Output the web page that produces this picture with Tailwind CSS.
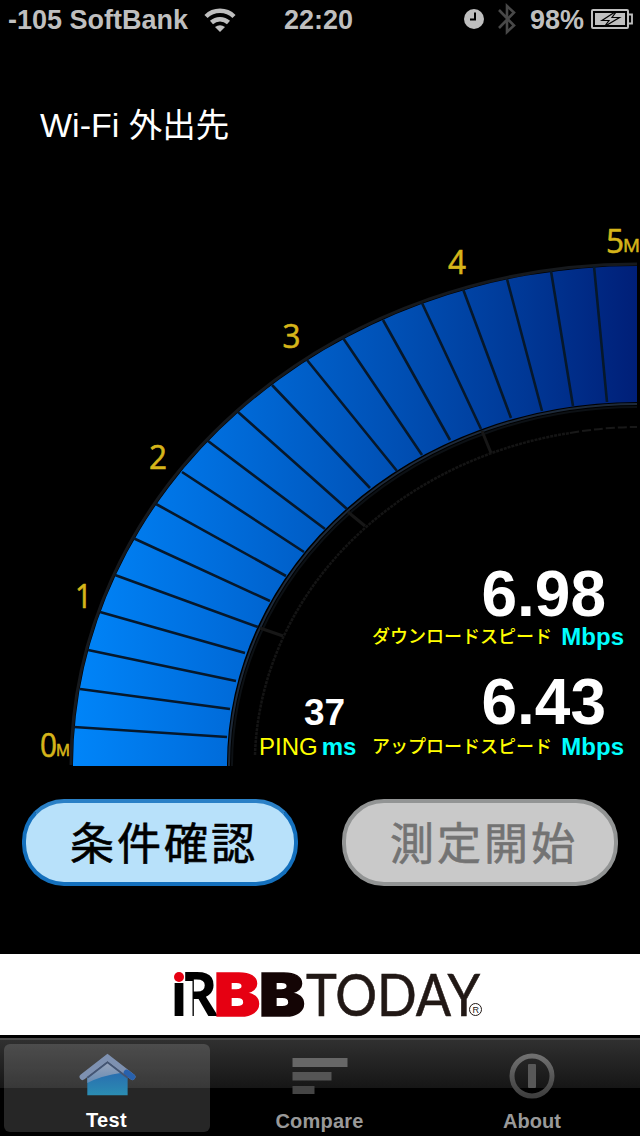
<!DOCTYPE html>
<html lang="ja">
<head>
  <meta charset="UTF-8">
  <meta name="viewport" content="width=device-width, initial-scale=1.0">
  <title>RBB TODAY Speed Test</title>
  <script src="https://cdn.jsdelivr.net/npm/@tailwindcss/browser@4"></script>
</head>
<body class="bg-black">
  <div class="w-[640px] h-[1136px] bg-black flex flex-col overflow-hidden font-['Liberation_Sans','Noto_Sans_CJK_JP',sans-serif]">
    <!-- Status bar -->
    <header class="h-10 shrink-0 grid grid-cols-[284px_70px_1fr] text-[27px] leading-10 font-bold text-[#bfbfbf] whitespace-nowrap">
      <div class="flex items-center pl-2">
        <span class="w-[196px]">-105 SoftBank</span>
        <svg class="w-8 h-6" viewBox="0 0 32 24" fill="none" stroke="#bfbfbf">
          <path d="M2 8.500A20 20 0 0 1 30 8.500" stroke-width="4.500"/>
          <path d="M7.500 14.500A12.500 12.500 0 0 1 24.500 14.500" stroke-width="4.500"/>
          <path d="M11 19Q16 15.500 21 19L16 24Z" fill="#bfbfbf" stroke="none"/>
        </svg>
      </div>
      <span>22:20</span>
      <div class="flex items-center">
        <svg class="w-5 h-5 ml-[110px] mb-0.5" viewBox="0 0 20 20">
          <circle cx="10" cy="10" r="10" fill="#bfbfbf"/>
          <path d="M11 3.500V10.500H6" fill="none" stroke="#000" stroke-width="2"/>
        </svg>
        <svg class="w-[18px] h-8 ml-[14px] mb-0.5" viewBox="0 0 18 32" fill="none" stroke="#484848" stroke-width="2.600">
          <path d="M1 7L16 22.500L9 29V3L16 9.500L1 25"/>
        </svg>
        <span class="ml-[14px]">98%</span>
        <svg class="w-[42px] h-5 ml-[7px] mb-0.5" viewBox="0 0 42 20">
          <rect x="1" y="1" width="36" height="18" rx="1" fill="none" stroke="#bfbfbf" stroke-width="2"/>
          <path d="M38 5.500H41V14.500H38" fill="none" stroke="#bfbfbf" stroke-width="1.800"/>
          <rect x="4" y="4" width="30" height="12" fill="#bfbfbf"/>
          <path d="M24 3L11 11.500H18L13.500 17.500L28.500 8.500H21L25 3Z" fill="#bfbfbf" stroke="#000" stroke-width="1.200"/>
        </svg>
      </div>
    </header>

    <h1 class="h-10 shrink-0 mt-[65px] pl-10 text-[34px] leading-10 font-normal text-white whitespace-nowrap">Wi-Fi <span class="text-[33.5px]">外出先</span></h1>

    <!-- Gauge -->
    <main class="relative h-[630px] shrink-0">
      <svg class="w-[640px] h-[630px]" viewBox="0 145 640 630">
        <defs>
          <linearGradient id="dial" gradientUnits="userSpaceOnUse" x1="73" y1="0" x2="637" y2="0">
            <stop offset="0" stop-color="#0085f9"/>
            <stop offset="0.230" stop-color="#0070e0"/>
            <stop offset="0.400" stop-color="#0060ca"/>
            <stop offset="0.600" stop-color="#004db1"/>
            <stop offset="0.800" stop-color="#003896"/>
            <stop offset="1" stop-color="#001f78"/>
          </linearGradient>
        </defs>
        <path d="M71 765A566 502 0 0 1 637 264" fill="none" stroke="#16191d" stroke-width="3"/>
        <path d="M73 766V765A564 500 0 0 1 637 266V402A410 362 0 0 0 227 765V766Z" fill="url(#dial)"/>
        <path d="M229 766A409 362 0 0 1 637 404" fill="none" stroke="#1d2a3a" stroke-width="2"/>
        <path d="M232 766A406 359 0 0 1 637 407" fill="none" stroke="#0c1014" stroke-width="2"/>
        <!-- Segment dividers -->
        <path d="M594 266L607 402M551 271L573 406M507 279L542 411M463 289L511 418M422 303L481 429M383 320L450 440M343 338L422 455M307 360L397 471M272 385L370 488M238 412L347 509M208 441L325 529M182 472L304 552M156 504L286 576M133 538L270 601M115 575L258 627M100 612L245 653M88 650L236 681M80 689L230 709M74 727L227 737" stroke="#06182b" stroke-width="2.600" fill="none"/>
        <!-- Inner ring -->
        <path d="M255 755A382 337 0 0 1 570 433" fill="none" stroke="#141414" stroke-width="2.500" stroke-dasharray="3 1"/>
        <path d="M570 433Q605 427 637 427" fill="none" stroke="#181818" stroke-width="2" stroke-dasharray="9 3"/>
        <path d="M482 431L491 453M348 512L365 526M260 628L283 636" stroke="#171717" stroke-width="3"/>
        <g class="font-['Open_Sans',sans-serif]" fill="#d6b51a" stroke="#d6b51a" stroke-width="0.600" font-size="32">
          <text x="40" y="757" textLength="17" lengthAdjust="spacingAndGlyphs">0</text>
          <text x="56" y="756" font-size="16" textLength="14" lengthAdjust="spacingAndGlyphs">M</text>
          <text x="75" y="608" textLength="17" lengthAdjust="spacingAndGlyphs">1</text>
          <text x="149" y="469" textLength="18" lengthAdjust="spacingAndGlyphs">2</text>
          <text x="282.500" y="348" textLength="18" lengthAdjust="spacingAndGlyphs">3</text>
          <text x="448" y="274" textLength="18" lengthAdjust="spacingAndGlyphs">4</text>
          <text x="606" y="253" textLength="18" lengthAdjust="spacingAndGlyphs">5</text>
          <text x="623" y="252" font-size="19" textLength="17" lengthAdjust="spacingAndGlyphs">M</text>
        </g>
      </svg>

      <!-- Results over the dial -->
      <div class="absolute left-[259px] top-[417px] w-[365px] flex items-start text-2xl leading-7 font-bold text-[#00ffff] whitespace-nowrap">
        <div class="w-[113px] pt-[131px]">
          <div class="pl-[45px] h-10 leading-10 text-[37px] text-white">37</div>
          <div class="flex gap-1"><span class="font-normal text-[#ffff00]">PING</span><span>ms</span></div>
        </div>
        <div class="w-[252px]">
          <div class="h-16 pr-[18px] text-right text-[64px] leading-[64px] text-white">6.98</div>
          <div class="flex items-center justify-between -mt-[3px]"><span class="text-lg leading-7 font-medium text-[#ffff00]">ダウンロードスピード</span><span>Mbps</span></div>
          <div class="h-16 mt-[19px] pr-[18px] text-right text-[64px] leading-[64px] text-white">6.43</div>
          <div class="flex items-center justify-between -mt-px"><span class="text-lg leading-7 font-medium text-[#ffff00]">アップロードスピード</span><span>Mbps</span></div>
        </div>
      </div>
    </main>

    <!-- Buttons -->
    <div class="mt-6 h-[87px] shrink-0 px-[22px] flex justify-between text-[44px] font-normal tracking-[3px] [-webkit-text-stroke:0.6px]">
      <button class="w-[276px] pl-2 pt-1 rounded-[42px] border-4 border-[#1470bd] border-t-[#2a80c6] bg-[#b8e1fa] text-black">条件確認</button>
      <button class="w-[276px] pl-2 pt-1 rounded-[42px] border-4 border-[#929494] bg-[#c9c9c9] text-[#737373]">測定開始</button>
    </div>

    <!-- Banner -->
    <div class="mt-[68px] h-[81px] shrink-0 bg-white">
      <svg class="w-[640px] h-[81px]" viewBox="0 0 640 81">
        <g class="font-['Open_Sans',sans-serif]" font-size="60" font-weight="700" fill="#000">
          <text x="180" y="62" textLength="38" lengthAdjust="spacingAndGlyphs">R</text>
          <rect x="183" y="27" width="9.500" height="36" fill="#fff"/>
          <circle cx="179" cy="23" r="5" fill="#e60012"/>
          <text x="170" y="62" textLength="18" lengthAdjust="spacingAndGlyphs">ı</text>
        </g>
        <g class="font-['Inter',sans-serif]" font-size="59" font-weight="900" stroke-width="1.500">
          <text x="214" y="62" fill="#e60012" stroke="#e60012" textLength="46" lengthAdjust="spacingAndGlyphs">B</text>
          <text x="259" y="62" fill="#140505" stroke="#140505" textLength="46" lengthAdjust="spacingAndGlyphs">B</text>
        </g>
        <text class="font-['Lato',sans-serif]" x="306" y="62" font-size="59" fill="#211815" stroke="#211815" stroke-width="0.600" textLength="174" lengthAdjust="spacingAndGlyphs">TODAY</text>
        <circle cx="475.500" cy="55.500" r="6" fill="#fff" stroke="#211815"/>
        <text class="font-['Liberation_Sans',sans-serif]" x="472.500" y="59" font-size="9" fill="#211815">R</text>
      </svg>
    </div>

    <!-- Tab bar -->
    <nav class="mt-[3px] h-[98px] shrink-0 grid grid-cols-[213px_213px_214px] border-t-2 border-[#4a4a4a] bg-linear-to-b from-[#303030] from-0% via-[#161616] via-50% to-black to-50% text-xl leading-6 font-bold text-[#999]">
      <a href="#" class="ml-1 mr-[3px] mt-1 h-[88px] rounded-md bg-white/15 text-white flex flex-col items-center pt-[9px]">
        <svg class="w-[60px] h-12" viewBox="0 0 60 48">
          <defs>
            <linearGradient id="gloss" x1="0" y1="0" x2="0" y2="1">
              <stop offset="0" stop-color="#98a4bb"/>
              <stop offset="1" stop-color="#668bb4"/>
            </linearGradient>
            <linearGradient id="wall" x1="0" y1="0" x2="0" y2="1">
              <stop offset="0" stop-color="#285fae"/>
              <stop offset="1" stop-color="#2b8db2"/>
            </linearGradient>
          </defs>
          <path d="M4 25.500L30.500 5L57 25.500" fill="none" stroke="#7e91b1" stroke-width="6.500" stroke-linecap="round" stroke-linejoin="miter"/>
          <path d="M51 21L57 25.500" fill="none" stroke="#2861ad" stroke-width="6.500" stroke-linecap="round"/>
          <path d="M9 26L30.500 10L52 26V45H9Z" fill="url(#wall)"/>
          <path d="M9 26L30.500 10L46 21Q24 24 9 32Z" fill="url(#gloss)"/>
          <path d="M9 26.500L30.500 10L52 26.500" fill="none" stroke="#435574" stroke-width="2"/>
        </svg>
        <span class="mt-2.5 -ml-px tracking-[0.3px]">Test</span>
      </a>
      <a href="#" class="flex flex-col items-center pt-[13px]">
        <svg class="w-[56px] h-12" viewBox="0 0 56 48">
          <rect x="0.500" y="5" width="55" height="9" fill="#676767"/>
          <rect x="0.500" y="19" width="39" height="8.500" fill="#555"/>
          <rect x="0.500" y="33" width="22" height="8" fill="#454545"/>
        </svg>
        <span class="mt-2 tracking-[0.2px]">Compare</span>
      </a>
      <a href="#" class="flex flex-col items-center pt-[13px] pr-0.5">
        <svg class="w-12 h-12" viewBox="0 0 48 48">
          <defs>
            <linearGradient id="ring" x1="0" y1="0" x2="0" y2="1">
              <stop offset="0" stop-color="#707070"/>
              <stop offset="1" stop-color="#3f3f3f"/>
            </linearGradient>
          </defs>
          <circle cx="24" cy="23" r="20" fill="none" stroke="url(#ring)" stroke-width="5"/>
          <rect x="20" y="11" width="8" height="24" rx="1" fill="#585858"/>
        </svg>
        <span class="mt-2">About</span>
      </a>
    </nav>
  </div>
</body>
</html>
